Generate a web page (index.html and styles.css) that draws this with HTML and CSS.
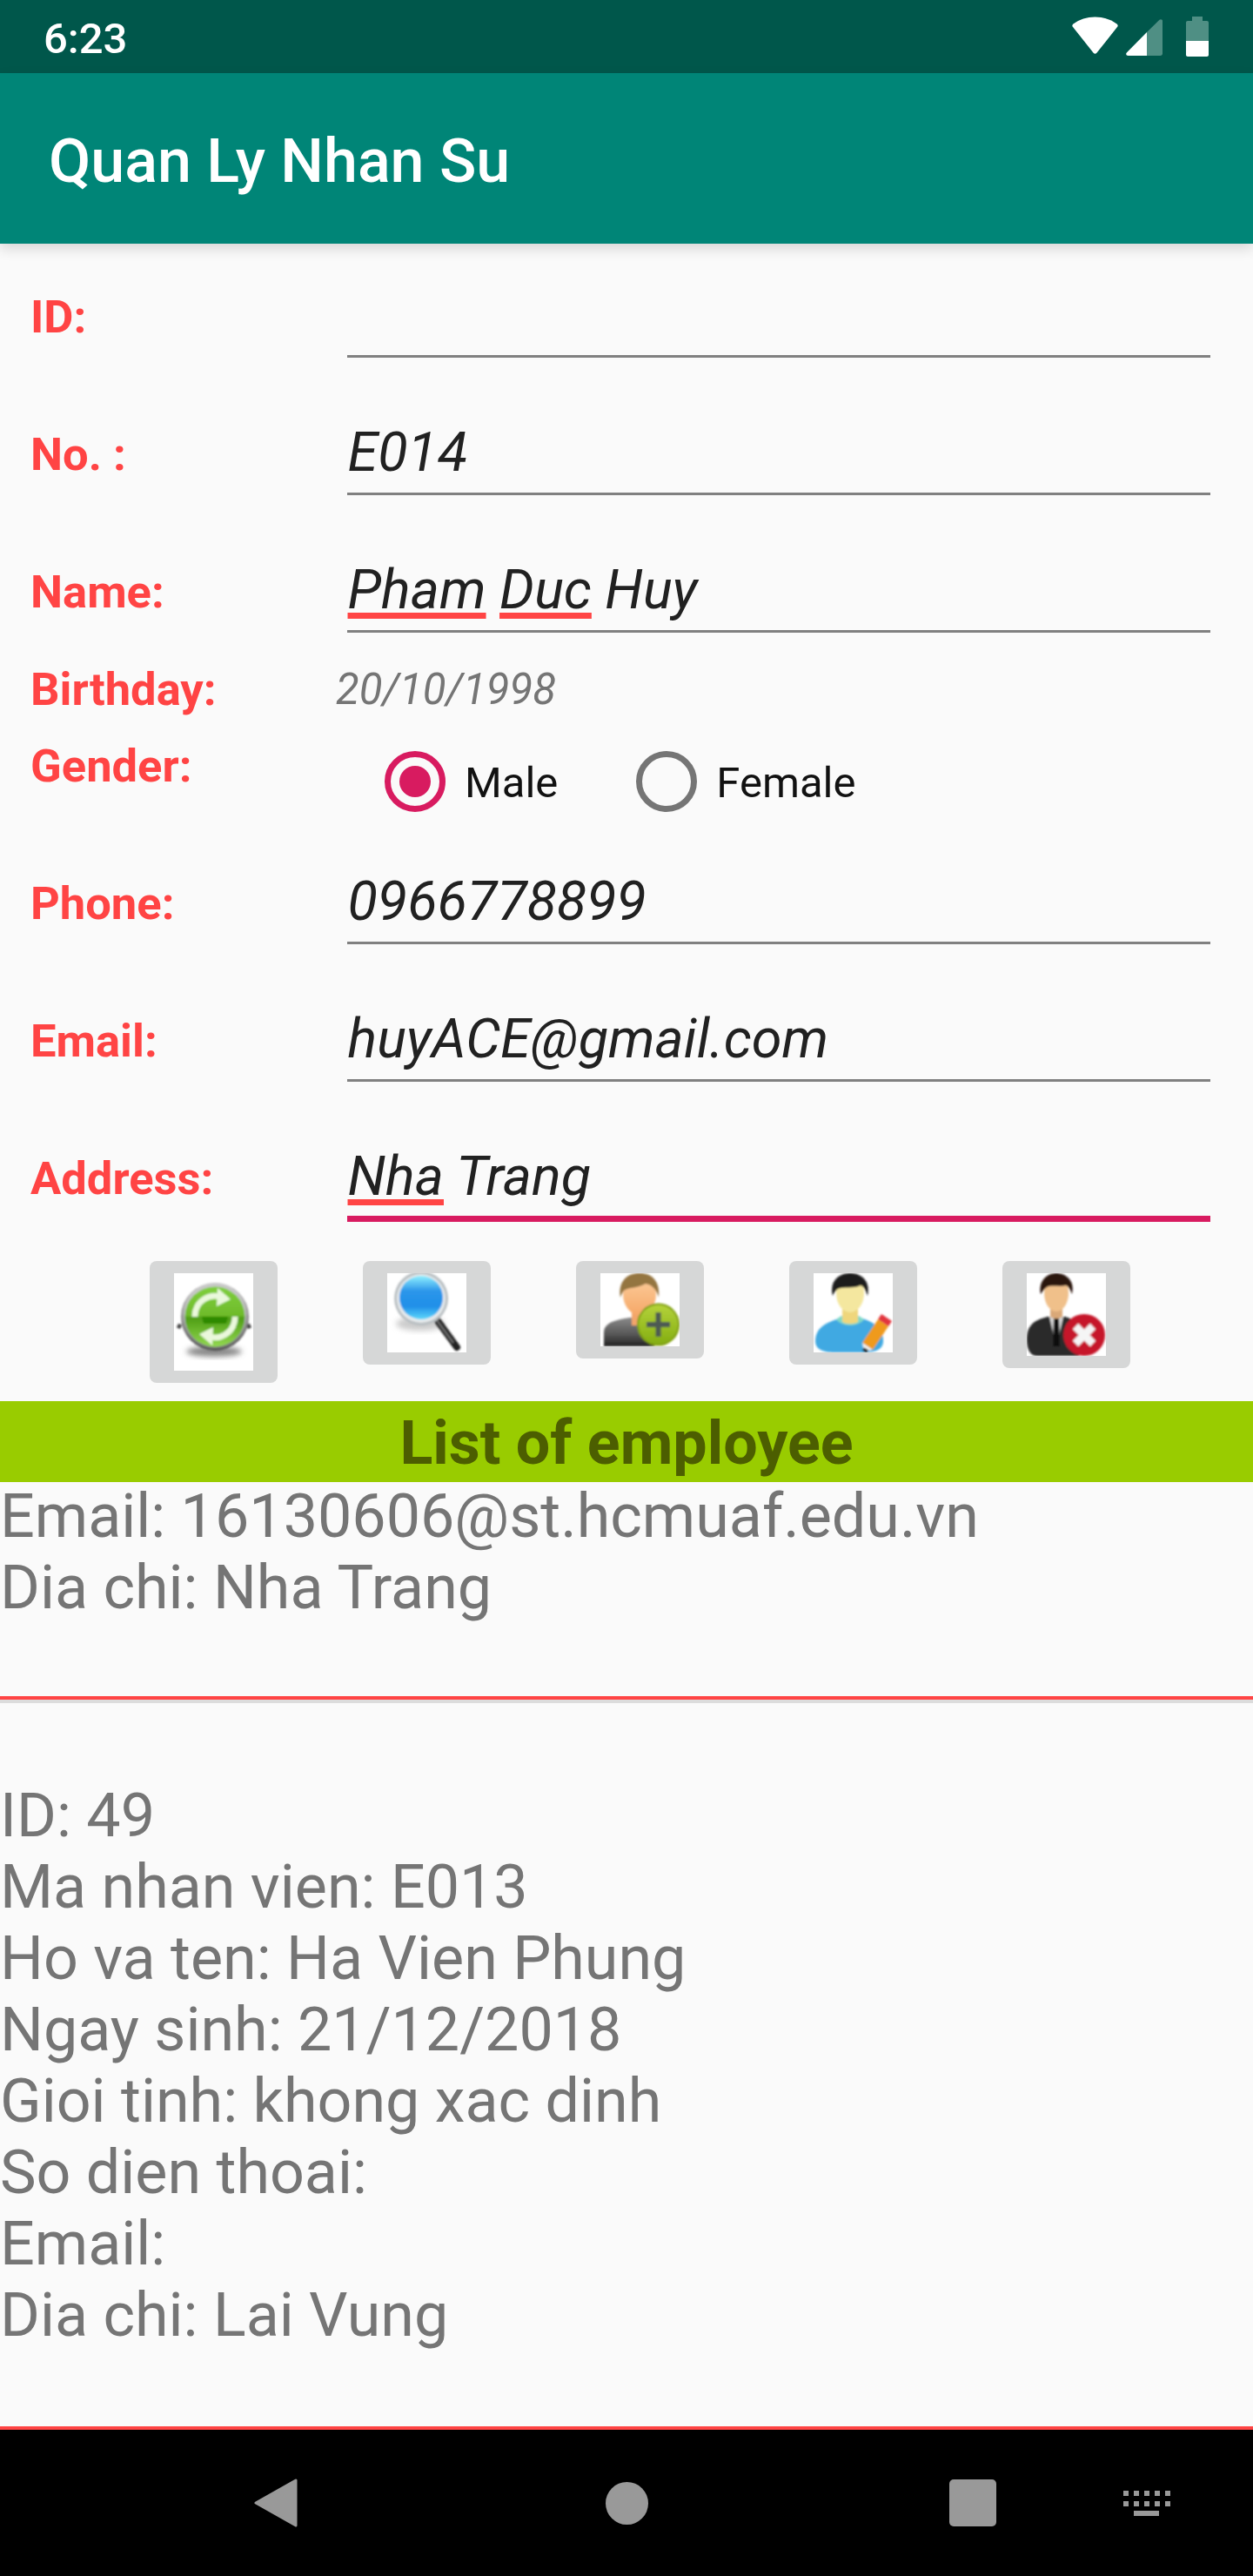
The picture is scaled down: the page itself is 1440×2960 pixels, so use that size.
FILE: index.html
```html
<!DOCTYPE html>
<html lang="en">
<head>
    <meta charset="UTF-8">
    <meta name="viewport" content="width=device-width, initial-scale=1.0">
    <title>Quan Ly Nhan Su</title>
    <link rel="stylesheet" href="styles.css">
</head>
<body>
    <div class="screen">
        <div class="status-bar">
            <span class="status-time">6:23</span>
            <div class="status-icons">
                <svg class="icon-wifi" width="53" height="43" viewBox="0 0 53 43">
                    <path d="M1.5 8.5C8.500 3.200 17 .5 26.500 .5S44.500 3.200 51.500 8.500C52.800 9.600 53 10.700 52.200 11.800L28.400 41.800C27.300 43 25.700 43 24.600 41.800L.8 11.800C0 10.700.2 9.600 1.500 8.500Z" fill="#fff"/>
                </svg>
                <svg class="icon-signal" width="42" height="42" viewBox="0 0 42 42">
                    <path d="M24 15 38.500 .8C40 -.4 42 .4 42 2V39.500C42 41 41 42 39.500 42H24Z" fill="#4f8f84"/>
                    <path d="M24 15V42H2.500C.5 42 -.6 40 .8 38.500Z" fill="#fff"/>
                </svg>
                <svg class="icon-battery" width="26" height="46" viewBox="0 0 26 46">
                    <path d="M7 0H19V5H24C25.200 5 26 5.800 26 7V28H0V7C0 5.800 .8 5 2 5H7Z" fill="#4f8f84"/>
                    <path d="M0 28H26V44C26 45.200 25.200 46 24 46H2C.8 46 0 45.200 0 44Z" fill="#fff"/>
                </svg>
            </div>
        </div>

        <div class="toolbar">Quan Ly Nhan Su</div>

        <div class="content">
            <form class="form">
                <div class="field field-first">
                    <label class="field-label">ID:</label>
                    <div class="field-value"></div>
                </div>
                <div class="field">
                    <label class="field-label">No. :</label>
                    <div class="field-value">E014</div>
                </div>
                <div class="field">
                    <label class="field-label">Name:</label>
                    <div class="field-value"><span class="misspelled">Pham</span> <span class="misspelled">Duc</span> Huy</div>
                </div>
                <div class="birthday-row">
                    <label class="field-label">Birthday:</label>
                    <span class="birthday-value">20/10/1998</span>
                </div>
                <div class="gender-row">
                    <label class="field-label">Gender:</label>
                    <div class="radio-group">
                        <div class="radio-option radio-male">
                            <span class="radio radio-checked"></span>
                            <span class="radio-text">Male</span>
                        </div>
                        <div class="radio-option">
                            <span class="radio"></span>
                            <span class="radio-text">Female</span>
                        </div>
                    </div>
                </div>
                <div class="field field-phone">
                    <label class="field-label">Phone:</label>
                    <div class="field-value">0966778899</div>
                </div>
                <div class="field">
                    <label class="field-label">Email:</label>
                    <div class="field-value">huyACE@gmail.com</div>
                </div>
                <div class="field field-address">
                    <label class="field-label">Address:</label>
                    <div class="field-value field-focused"><span class="misspelled">Nha</span> Trang</div>
                </div>
            </form>

            <div class="actions">
                <button type="button" class="action-btn">
                    <svg width="91" height="112" viewBox="0 0 91 112">
                        <defs>
                            <filter id="soft" x="-10%" y="-10%" width="120%" height="120%"><feGaussianBlur stdDeviation="0.8"/></filter>
                            <filter id="softer" x="-30%" y="-30%" width="160%" height="160%"><feGaussianBlur stdDeviation="3"/></filter>
                            <radialGradient id="rim" cx="50%" cy="45%" r="55%"><stop offset="80%" stop-color="#c8c8c8"/><stop offset="100%" stop-color="#3c3c3c"/></radialGradient>
                            <linearGradient id="greenBall" x1="0" y1="0" x2="0" y2="1"><stop offset="0" stop-color="#7fcf3c"/><stop offset="0.48" stop-color="#6fbb2b"/><stop offset="0.52" stop-color="#4f9e14"/><stop offset="1" stop-color="#92d850"/></linearGradient>
                            <linearGradient id="blueLens" x1="0" y1="0" x2="0" y2="1"><stop offset="0" stop-color="#8ff0ff"/><stop offset="0.35" stop-color="#2c96ea"/><stop offset="0.7" stop-color="#1f8fe8"/><stop offset="1" stop-color="#5fd8fb"/></linearGradient>
                            <linearGradient id="darkBody" x1="0" y1="0" x2="0" y2="1"><stop offset="0" stop-color="#8a8a8a"/><stop offset="0.6" stop-color="#555"/><stop offset="1" stop-color="#222"/></linearGradient>
                            <linearGradient id="skin" x1="0" y1="0" x2="0" y2="1"><stop offset="0" stop-color="#fcd0a0"/><stop offset="1" stop-color="#f6a868"/></linearGradient>
                            <linearGradient id="addBall" x1="0" y1="0" x2="0" y2="1"><stop offset="0" stop-color="#b4d23a"/><stop offset="1" stop-color="#84ae12"/></linearGradient>
                        </defs>
                        <ellipse cx="46" cy="90" rx="32" ry="6" fill="#888" filter="url(#softer)"/>
                        <g filter="url(#soft)">
                            <path d="M8 62 4 60M84 62 88 60" stroke="#444" stroke-width="5"/>
                            <circle cx="47" cy="50" r="39" fill="url(#rim)"/>
                            <circle cx="47" cy="50" r="34.500" fill="url(#greenBall)"/>
                            <path d="M32 50H62L60 58H34Z" fill="#2f8a00"/>
                            <path d="M24 50A23 23 0 0 1 58 29" fill="none" stroke="#eaf8dc" stroke-width="7"/>
                            <path d="M70 50A23 23 0 0 1 36 71" fill="none" stroke="#eaf8dc" stroke-width="7"/>
                            <path d="M50 17 65 30 49 38Z" fill="#eaf8dc"/>
                            <path d="M44 83 29 70 45 62Z" fill="#eaf8dc"/>
                        </g>
                    </svg>
                </button>
                <button type="button" class="action-btn">
                    <svg width="91" height="91" viewBox="0 0 91 91">
                        <ellipse cx="38" cy="58" rx="28" ry="8" fill="#ccc" filter="url(#softer)"/>
                        <g filter="url(#soft)">
                            <path d="M56 52 80 85" stroke="#222" stroke-width="8" stroke-linecap="round"/>
                            <path d="M57 54 76 80" stroke="#777" stroke-width="2"/>
                            <circle cx="39" cy="29" r="31" fill="#b9bfc2"/>
                            <circle cx="39" cy="29" r="28" fill="#e6eaec"/>
                            <circle cx="39" cy="28" r="25" fill="url(#blueLens)"/>
                        </g>
                    </svg>
                </button>
                <button type="button" class="action-btn">
                    <svg width="91" height="84" viewBox="0 0 91 84">
                        <g filter="url(#soft)">
                            <path d="M4 84V68C4 58 14 54 34 51H62V84Z" fill="url(#darkBody)"/>
                            <path d="M36 36H56V60H36Z" fill="#f2a56a"/>
                            <ellipse cx="45" cy="24" rx="19" ry="24" fill="url(#skin)"/>
                            <path d="M23 28C20 10 30 0 45 0S69 10 67 28C65 20 60 13 52 12 44 17 32 16 27 20 25 22 24 25 23 28Z" fill="#94743f"/>
                            <circle cx="66.500" cy="59" r="24.500" fill="#7f9e10"/>
                            <circle cx="66.500" cy="59" r="22.500" fill="url(#addBall)"/>
                            <path d="M66.500 45V73M53 59H80" stroke="#4d5a52" stroke-width="6"/>
                        </g>
                    </svg>
                </button>
                <button type="button" class="action-btn">
                    <svg width="91" height="91" viewBox="0 0 91 91">
                        <g filter="url(#soft)">
                            <path d="M2 78C2 62 16 56 30 52H56C68 56 80 62 80 78 80 88 70 91 58 91H24C12 91 2 88 2 78Z" fill="#3fa9e2"/>
                            <path d="M26 53C32 62 52 62 58 53L52 49H32Z" fill="#7ed8c8"/>
                            <path d="M33 36H51V56C46 59 38 59 33 56Z" fill="#efd67c"/>
                            <ellipse cx="42" cy="23" rx="16" ry="22" fill="#f4e79f"/>
                            <path d="M22 26C18 8 30 0 42 0S66 8 62 26C60 20 58 15 54 14 46 18 34 15 28 18 25 20 23 23 22 26Z" fill="#1d1d1d"/>
                            <path d="M74 53 86 61 68 88 56 80Z" fill="#ef9a1c"/>
                            <path d="M74 53 78 47 90 55 86 61Z" fill="#e2343c"/>
                            <path d="M56 80 68 88 58 90Z" fill="#f6f6f6"/>
                            <path d="M57 87 62 90" stroke="#222" stroke-width="4"/>
                        </g>
                    </svg>
                </button>
                <button type="button" class="action-btn">
                    <svg width="91" height="95" viewBox="0 0 91 95">
                        <g filter="url(#soft)">
                            <path d="M0 76C0 60 8 54 24 50H44C58 54 60 60 60 95H12C4 95 0 88 0 76Z" fill="#2a2a2a"/>
                            <path d="M26 50H42L37 72H31Z" fill="#d8d8d8"/>
                            <path d="M31 52H37L38 84H30Z" fill="#111"/>
                            <path d="M27 36H41V50C37 53 31 53 27 50Z" fill="#d9a878"/>
                            <ellipse cx="34" cy="23" rx="14" ry="21" fill="#f0c08a"/>
                            <path d="M16 24C13 8 24 0 34 0S56 8 52 24C50 19 48 15 45 14 38 16 28 13 23 16 20 18 18 21 16 24Z" fill="#2a1510"/>
                            <circle cx="66" cy="71" r="24" fill="#c6182c"/>
                            <path d="M56 61 76 81M76 61 56 81" stroke="#f5f5f5" stroke-width="9"/>
                        </g>
                    </svg>
                </button>
            </div>

            <h2 class="list-title">List of employee</h2>

            <div class="employee-list">
                <div class="employee employee-cut">
                    <div>Email: 16130606@st.hcmuaf.edu.vn</div>
                    <div>Dia chi: Nha Trang</div>
                </div>
                <div class="employee employee-last">
                    <div>ID: 49</div>
                    <div>Ma nhan vien: E013</div>
                    <div>Ho va ten: Ha Vien Phung</div>
                    <div>Ngay sinh: 21/12/2018</div>
                    <div>Gioi tinh: khong xac dinh</div>
                    <div>So dien thoai:</div>
                    <div>Email:</div>
                    <div>Dia chi: Lai Vung</div>
                </div>
            </div>
        </div>

        <div class="nav-bar">
            <svg class="nav-back" width="50" height="56" viewBox="0 0 50 56">
                <path d="M48 2V54L2 28Z" fill="#999" stroke="#999" stroke-width="3" stroke-linejoin="round"/>
            </svg>
            <span class="nav-home"></span>
            <span class="nav-recent"></span>
            <svg class="nav-keyboard" width="54" height="30" viewBox="0 0 54 30">
                <path d="M0 1H6V7H0ZM12 1H18V7H12ZM24 1H30V7H24ZM36 1H42V7H36ZM48 1H54V7H48ZM0 13H6V19H0ZM12 13H18V19H12ZM24 13H30V19H24ZM36 13H42V19H36ZM48 13H54V19H48ZM12 24H41V30H12Z" fill="#999"/>
            </svg>
        </div>
    </div>
</body>
</html>
```

FILE: styles.css
```css
body {
    margin: 0;
    padding: 0;
    font-family: Roboto, "Liberation Sans", sans-serif;
    background: #fafafa;
}

.screen {
    width: 1440px;
    height: 2960px;
    display: flex;
    flex-direction: column;
    overflow: hidden;
}

/* status bar */
.status-bar {
    height: 84px;
    flex: none;
    display: flex;
    justify-content: space-between;
    padding: 0 51px 0 50px;
    background: #00574b;
    color: white;
    box-sizing: border-box;
}

.status-time {
    font-size: 49px;
    font-weight: 500;
    line-height: 90px;
}

.status-icons {
    display: flex;
    align-items: flex-start;
    padding-top: 19px;
}

.icon-signal {
    margin: 3px 0 0 9px;
}

.icon-battery {
    margin-left: 27px;
}

/* toolbar */
.toolbar {
    position: relative;
    height: 196px;
    flex: none;
    padding-left: 56px;
    background: #008577;
    color: white;
    font-size: 70px;
    font-weight: 500;
    line-height: 202px;
    box-shadow: 0 6px 14px rgba(0, 0, 0, 0.14);
}

.content {
    flex: 1;
    min-height: 0;
    display: flex;
    flex-direction: column;
    overflow: hidden;
}

/* form */
.field {
    height: 158px;
    display: flex;
    align-items: flex-end;
    padding-left: 35px;
    padding-right: 49px;
}

.field-first {
    height: 131px;
}

.field-phone {
    height: 140px;
}

.field-address {
    height: 161px;
}

.field-label {
    display: block;
    width: 363.5px;
    flex: none;
    padding-bottom: 5px;
    color: #ff4444;
    font-size: 52.5px;
    font-weight: 700;
    line-height: 84px;
}

.field-address .field-label {
    padding-bottom: 8px;
}

.field-value {
    flex: 1;
    height: 84px;
    padding-bottom: 4.5px;
    border-bottom: 3.5px solid #808080;
    color: #212121;
    font-size: 63px;
    font-style: italic;
    line-height: 84px;
    text-indent: 1px;
}

.field-focused {
    padding-bottom: 3px;
    border-bottom: 7px solid #d81b60;
}

.misspelled {
    text-decoration: underline #ff4444 7px;
    text-decoration-skip-ink: none;
    text-underline-offset: 5px;
}

.birthday-row {
    height: 113px;
    display: flex;
    padding-left: 35px;
}

.birthday-row .field-label {
    width: 351px;
    padding: 0;
    line-height: 131px;
}

.birthday-value {
    color: #757575;
    font-size: 49px;
    font-style: italic;
    line-height: 131px;
}

.gender-row {
    height: 105px;
    display: flex;
    padding-left: 35px;
}

.gender-row .field-label {
    width: 407px;
    padding: 0;
    line-height: 80px;
}

.radio-group {
    display: flex;
    padding-top: 23px;
    height: 70px;
}

.radio-option {
    display: flex;
    align-items: center;
}

.radio-male {
    margin-right: 90px;
}

.radio {
    width: 70px;
    height: 70px;
    box-sizing: border-box;
    border: 7px solid #757575;
    border-radius: 50%;
    display: flex;
    align-items: center;
    justify-content: center;
}

.radio-checked {
    border-color: #d81b60;
}

.radio-checked::after {
    content: "";
    width: 36px;
    height: 36px;
    border-radius: 50%;
    background: #d81b60;
}

.radio-text {
    margin-left: 22px;
    padding-top: 4px;
    color: #111;
    font-size: 49px;
    line-height: 70px;
}

/* buttons */
.actions {
    display: flex;
    align-items: flex-start;
    gap: 98px;
    height: 206px;
    padding: 45px 0 0 172px;
    box-sizing: border-box;
    flex: none;
}

.action-btn {
    padding: 14px 28px;
    border: none;
    border-radius: 8px;
    background: #d6d7d7;
    flex: none;
    line-height: 0;
}

.action-btn svg {
    display: block;
    background: white;
}

/* list */
.list-title {
    margin: 0;
    height: 93px;
    flex: none;
    background: #99cc00;
    color: #4c5e00;
    font-size: 70px;
    font-weight: 700;
    line-height: 97px;
    text-align: center;
}

.employee-list {
    flex: 1;
    min-height: 0;
    margin-top: -2px;
    color: #757575;
    font-size: 70px;
    line-height: 82px;
}

.employee {
    border-bottom: 4px solid #ff4444;
}

.employee-cut {
    height: 248px;
    box-shadow: 0 4px 0 #dcdcdc;
}

.employee-last {
    padding-top: 92px;
    height: 743px;
}

/* navigation bar */
.nav-bar {
    height: 168px;
    flex: none;
    display: flex;
    align-items: center;
    padding-left: 292px;
    background: black;
}

.nav-home {
    width: 49px;
    height: 49px;
    margin-left: 354px;
    border-radius: 50%;
    background: #999;
}

.nav-recent {
    width: 54px;
    height: 54px;
    margin-left: 346px;
    border-radius: 5px;
    background: #999;
}

.nav-keyboard {
    margin-left: 146px;
}
```
